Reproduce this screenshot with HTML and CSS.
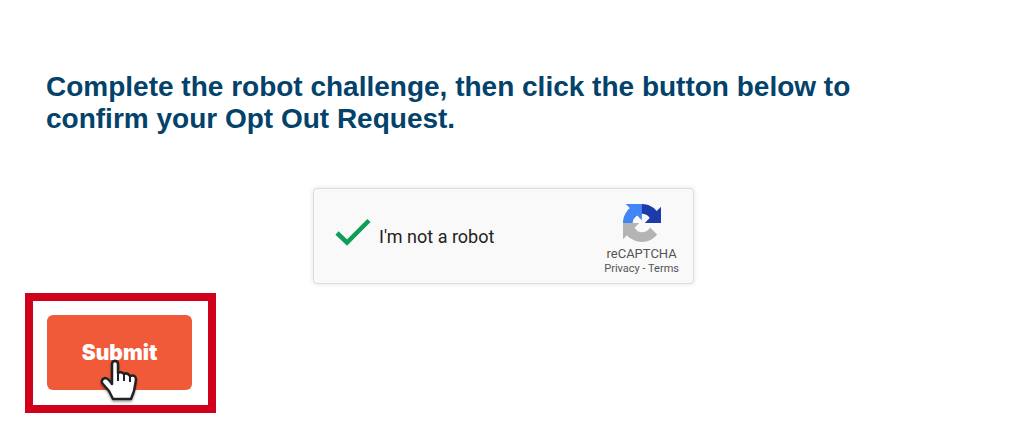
FILE: index.html
```
<!DOCTYPE html>
<html lang="en">
<head>
    <meta charset="UTF-8">
    <meta name="viewport" content="width=device-width, initial-scale=1.0">
    <title>Confirm Opt Out Request</title>
    <link rel="stylesheet" href="styles.css">
</head>
<body>
    <form class="opt-out">
        <h1>Complete the robot challenge, then click the button below to confirm your Opt Out Request.</h1>

        <div class="captcha">
            <div class="challenge">
                <span class="check">
                    <input type="checkbox" id="notRobot" checked>
                    <svg width="36" height="28" viewBox="0 0 36 28" aria-hidden="true">
                        <path d="M2 15L12 24.500L34 2.500" fill="none" stroke="#0f9d58" stroke-width="4.500"/>
                    </svg>
                </span>
                <label for="notRobot">I'm not a robot</label>
            </div>
            <div class="brand">
                <svg width="38" height="38" viewBox="0 0 64 64" aria-hidden="true">
                    <path fill="#1c3aa9" d="M64 31.955l-.033-1.37V4.687l-7.16 7.16C50.948 4.674 42.033.093 32.05.093c-10.4 0-19.622 4.96-25.458 12.64l11.736 11.86a15.55 15.55 0 0 1 4.754-5.334c2.05-1.6 4.952-2.906 8.968-2.906.485 0 .86.057 1.135.163 4.976.393 9.288 3.14 11.828 7.124l-8.307 8.307L64 31.953"/>
                    <path fill="#4285f4" d="M31.862.094l-1.37.033H4.594l7.16 7.16C4.58 13.147 0 22.06 0 32.046c0 10.4 4.96 19.622 12.64 25.458L24.5 45.768a15.55 15.55 0 0 1-5.334-4.754c-1.6-2.05-2.906-4.952-2.906-8.968 0-.485.057-.86.163-1.135.393-4.976 3.14-9.288 7.124-11.828l8.307 8.307L31.86.095"/>
                    <path fill="#b4b4b4" d="M.001 32.045l.033 1.37v25.898l7.16-7.16c5.86 7.173 14.774 11.754 24.76 11.754 10.4 0 19.622-4.96 25.458-12.64l-11.736-11.86a15.55 15.55 0 0 1-4.754 5.334c-2.05 1.6-4.952 2.906-8.968 2.906-.485 0-.86-.057-1.135-.163-4.976-.393-9.288-3.14-11.828-7.124l8.307-8.307c-10.522.04-22.4.066-27.295-.005"/>
                </svg>
                <div class="brand-name">reCAPTCHA</div>
                <div class="links"><a href="#">Privacy</a> - <a href="#">Terms</a></div>
            </div>
        </div>

        <div class="highlight">
            <button type="submit">Submit</button>
            <svg class="pointer" width="42" height="48" viewBox="0 0 42 48" aria-hidden="true">
                <path d="M13 26V6Q13 3 16 3Q19 3 19 6V15Q22 13 25 16Q28 14 31 18Q37 16 37 22L35 33L32 41H14L10 33L3 25Q2 21 6 20Q9 20 13 26Z" fill="#fff" stroke="#222" stroke-width="2.500" stroke-linejoin="round"/>
                <path d="M19 15V23M25 16V23M31 18V24" fill="none" stroke="#222" stroke-width="2"/>
            </svg>
        </div>
    </form>
</body>
</html>
```
FILE: styles.css
```
body {
    margin: 0;
    background: #fff;
    font-family: "Liberation Sans", Arial, sans-serif;
}

.opt-out {
    padding: 71px 154px 32px 25px;
}

h1 {
    margin: 0 0 53px;
    padding-left: 21px;
    color: #03426a;
    font-size: 28px;
    line-height: 32px;
}

.captcha {
    display: flex;
    justify-content: space-between;
    align-items: center;
    box-sizing: border-box;
    width: 381px;
    min-height: 96px;
    margin: 0 auto 9px 288px;
    padding: 0 14px 0 21px;
    border: 1px solid #dcdcdc;
    border-radius: 4px;
    background: #f9f9f9;
    box-shadow: 0 0 4px 1px rgba(0, 0, 0, 0.08);
    font-family: Roboto, sans-serif;
}

.challenge {
    display: flex;
    align-items: center;
    gap: 8px;
    color: #222;
    font-size: 18px;
}

.check {
    display: grid;
    padding-bottom: 8px;
}

.check input,
.check svg {
    grid-area: 1 / 1;
}

.check input {
    width: 36px;
    height: 28px;
    margin: 0;
    appearance: none;
    cursor: pointer;
}

.check svg {
    visibility: hidden;
    pointer-events: none;
}

.check input:checked + svg {
    visibility: visible;
}

.brand {
    display: flex;
    flex-direction: column;
    align-items: center;
    padding-top: 8px;
    color: #555;
}

.brand-name {
    margin-top: 4px;
    font-size: 13px;
    line-height: 16px;
}

.links {
    font-size: 11px;
    line-height: 14px;
}

.links a {
    color: inherit;
    text-decoration: none;
}

.highlight {
    position: relative;
    width: fit-content;
    padding: 14px 16px 15px 14px;
    border: 8px solid #d0021b;
}

button {
    display: block;
    width: 145px;
    height: 75px;
    padding: 0;
    border: none;
    border-radius: 6px;
    background: #f15a38;
    color: #fff;
    font-family: Inter, "Arial Black", sans-serif;
    font-size: 21px;
    font-weight: 900;
    cursor: pointer;
}

.pointer {
    position: absolute;
    top: 57px;
    left: 66px;
    filter: drop-shadow(0 2px 1px rgba(0, 0, 0, 0.3));
    pointer-events: none;
}
```
